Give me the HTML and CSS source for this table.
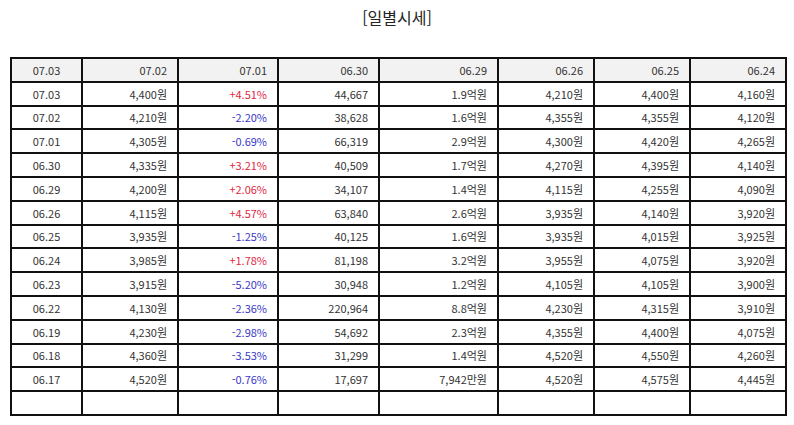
FILE: index.html
```html
<!DOCTYPE html>
<html lang="ko">
<head>
<meta charset="utf-8">
<title>일별시세</title>
<link rel="stylesheet" href="styles.css">
</head>
<body>
<div class="page">
  <h1 class="title">[일별시세]</h1>
  <div class="grid" role="table">
    <div class="cell head day">07.03</div><div class="cell head">07.02</div><div class="cell head">07.01</div><div class="cell head">06.30</div><div class="cell head">06.29</div><div class="cell head">06.26</div><div class="cell head">06.25</div><div class="cell head">06.24</div>

    <div class="cell day">07.03</div><div class="cell">4,400원</div><div class="cell up">+4.51%</div><div class="cell">44,667</div><div class="cell">1.9억원</div><div class="cell">4,210원</div><div class="cell">4,400원</div><div class="cell">4,160원</div>
    <div class="cell day">07.02</div><div class="cell">4,210원</div><div class="cell down">-2.20%</div><div class="cell">38,628</div><div class="cell">1.6억원</div><div class="cell">4,355원</div><div class="cell">4,355원</div><div class="cell">4,120원</div>
    <div class="cell day">07.01</div><div class="cell">4,305원</div><div class="cell down">-0.69%</div><div class="cell">66,319</div><div class="cell">2.9억원</div><div class="cell">4,300원</div><div class="cell">4,420원</div><div class="cell">4,265원</div>
    <div class="cell day">06.30</div><div class="cell">4,335원</div><div class="cell up">+3.21%</div><div class="cell">40,509</div><div class="cell">1.7억원</div><div class="cell">4,270원</div><div class="cell">4,395원</div><div class="cell">4,140원</div>
    <div class="cell day">06.29</div><div class="cell">4,200원</div><div class="cell up">+2.06%</div><div class="cell">34,107</div><div class="cell">1.4억원</div><div class="cell">4,115원</div><div class="cell">4,255원</div><div class="cell">4,090원</div>
    <div class="cell day">06.26</div><div class="cell">4,115원</div><div class="cell up">+4.57%</div><div class="cell">63,840</div><div class="cell">2.6억원</div><div class="cell">3,935원</div><div class="cell">4,140원</div><div class="cell">3,920원</div>
    <div class="cell day">06.25</div><div class="cell">3,935원</div><div class="cell down">-1.25%</div><div class="cell">40,125</div><div class="cell">1.6억원</div><div class="cell">3,935원</div><div class="cell">4,015원</div><div class="cell">3,925원</div>
    <div class="cell day">06.24</div><div class="cell">3,985원</div><div class="cell up">+1.78%</div><div class="cell">81,198</div><div class="cell">3.2억원</div><div class="cell">3,955원</div><div class="cell">4,075원</div><div class="cell">3,920원</div>
    <div class="cell day">06.23</div><div class="cell">3,915원</div><div class="cell down">-5.20%</div><div class="cell">30,948</div><div class="cell">1.2억원</div><div class="cell">4,105원</div><div class="cell">4,105원</div><div class="cell">3,900원</div>
    <div class="cell day">06.22</div><div class="cell">4,130원</div><div class="cell down">-2.36%</div><div class="cell">220,964</div><div class="cell">8.8억원</div><div class="cell">4,230원</div><div class="cell">4,315원</div><div class="cell">3,910원</div>
    <div class="cell day">06.19</div><div class="cell">4,230원</div><div class="cell down">-2.98%</div><div class="cell">54,692</div><div class="cell">2.3억원</div><div class="cell">4,355원</div><div class="cell">4,400원</div><div class="cell">4,075원</div>
    <div class="cell day">06.18</div><div class="cell">4,360원</div><div class="cell down">-3.53%</div><div class="cell">31,299</div><div class="cell">1.4억원</div><div class="cell">4,520원</div><div class="cell">4,550원</div><div class="cell">4,260원</div>
    <div class="cell day">06.17</div><div class="cell">4,520원</div><div class="cell down">-0.76%</div><div class="cell">17,697</div><div class="cell">7,942만원</div><div class="cell">4,520원</div><div class="cell">4,575원</div><div class="cell">4,445원</div>
    <div class="cell day"></div><div class="cell"></div><div class="cell"></div><div class="cell"></div><div class="cell"></div><div class="cell"></div><div class="cell"></div><div class="cell"></div>
  </div>
</div>
</body>
</html>
```

FILE: styles.css
```css
html, body {
  margin: 0;
  padding: 0;
  background: #fff;
}

.page {
  padding: 0 10px;
  font-family: "Noto Sans CJK KR", "Noto Sans", sans-serif;
  color: #333;
}

.title {
  margin: 0;
  padding-top: 5px;
  height: 57px;
  box-sizing: border-box;
  text-align: center;
  font-size: 16px;
  font-weight: normal;
  line-height: 24px;
  color: #222;
}

.grid {
  display: grid;
  grid-template-columns: 69px 94px 98px 99px 117px 94px 94px 94px;
  grid-auto-rows: 21.8px;
  gap: 2px;
  padding: 2px;
  width: 777px;
  box-sizing: border-box;
  background: #111;
  font-size: 11px;
}

.cell {
  display: flex;
  align-items: center;
  justify-content: flex-end;
  padding-right: 10px;
  background: #fff;
  color: #333;
  white-space: nowrap;
  line-height: 14px;
}

.cell.head {
  background: #f2f2f2;
}

.cell.day {
  justify-content: center;
  padding-right: 0;
}

.cell.up { color: #e0283f; }
.cell.down { color: #3838c8; }
```
